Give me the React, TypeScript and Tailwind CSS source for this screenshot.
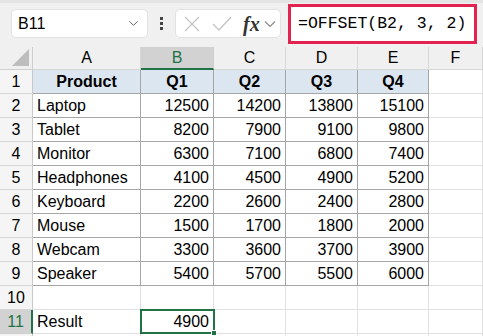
import { ChevronDown } from 'lucide-react';

const rows: [string, number, number, number, number][] = [
  ['Laptop', 12500, 14200, 13800, 15100],
  ['Tablet', 8200, 7900, 9100, 9800],
  ['Monitor', 6300, 7100, 6800, 7400],
  ['Headphones', 4100, 4500, 4900, 5200],
  ['Keyboard', 2200, 2600, 2400, 2800],
  ['Mouse', 1500, 1700, 1800, 2000],
  ['Webcam', 3300, 3600, 3700, 3900],
  ['Speaker', 5400, 5700, 5500, 6000],
];

const cols = ['A', 'B', 'C', 'D', 'E', 'F'];

function Toolbar() {
  return (
    <div className="h-[47px] bg-[#f0f0f0] border-t-[3px] border-[#e4e4e4] flex items-start">
      <div className="mt-[6px] ml-[11px] w-[137px] h-[29px] bg-white border border-[#e2e2e2] rounded-[5px] flex items-center pl-[6px] pr-[6px]">
        <span className="flex-1 text-[16px] text-black">B11</span>
        <ChevronDown className="w-[15px] h-[15px] text-[#555]" strokeWidth={1.5} />
      </div>
      <div className="mt-[14px] ml-[12px] flex flex-col gap-[2px]">
        <div className="w-[3px] h-[3px] bg-[#444]" />
        <div className="w-[3px] h-[3px] bg-[#444]" />
        <div className="w-[3px] h-[3px] bg-[#444]" />
      </div>
      <div className="mt-[6px] ml-[12px] w-[106px] h-[29px] bg-white border border-[#e2e2e2] rounded-[5px] flex items-center pl-[8px]">
        <svg width="16" height="16" viewBox="0 0 16 16" className="mt-[1px]">
          <path d="M1 1 L15 15 M15 1 L1 15" stroke="#c4c4c4" strokeWidth="1.3" fill="none" />
        </svg>
        <svg width="20" height="16" viewBox="0 0 20 16" className="ml-[12px] mt-[1px]">
          <path d="M1 8 L7 14 L19 1" stroke="#c4c4c4" strokeWidth="1.3" fill="none" />
        </svg>
        <span className="ml-[11px] text-[20px] italic font-bold text-[#333] leading-none" style={{ fontFamily: '"Liberation Serif", serif' }}>
          fx
        </span>
        <svg width="12" height="8" viewBox="0 0 12 8" className="ml-[4px]">
          <path d="M1 1.5 L6 6.5 L11 1.5" stroke="#8a8a8a" strokeWidth="1.2" fill="none" />
        </svg>
      </div>
      <div className="mt-[1px] ml-[7px] w-[189px] h-[40px] bg-white border-[3px] border-[#e2224f] flex items-center pl-[7px]">
        <span className="text-[16.5px] text-black whitespace-nowrap" style={{ fontFamily: '"Liberation Mono", monospace' }}>
          =OFFSET(B2, 3, 2)
        </span>
      </div>
    </div>
  );
}

function Cell({
  children,
  table,
  header,
  bold,
  align = 'left',
}: {
  children?: React.ReactNode;
  table?: boolean;
  header?: boolean;
  bold?: boolean;
  align?: 'left' | 'right' | 'center';
}) {
  const border = table ? 'border-[#a6a6a6]' : 'border-[#e1e1e1]';
  const bg = header ? 'bg-[#dce6f1]' : 'bg-white';
  const justify = align === 'right' ? 'justify-end' : align === 'center' ? 'justify-center' : 'justify-start';
  return (
    <div className={`h-[24px] border-r border-b ${border} ${bg} flex items-center px-[4px] ${justify} ${bold ? 'font-bold' : ''}`}>
      {children}
    </div>
  );
}

function RowHead({ n, selected }: { n?: number; selected?: boolean }) {
  return (
    <div
      className={
        selected
          ? 'h-[24px] border-b border-[#d0d0d0] border-r-2 border-r-[#217346] bg-[#d2d2d2] text-[#217346] flex items-center justify-center'
          : 'h-[24px] border-b border-[#d6d6d6] border-r border-r-[#c8c8c8] bg-[#f5f5f5] flex items-center justify-center'
      }
    >
      {n}
    </div>
  );
}

export default function App() {
  return (
    <div className="w-[483px] h-[336px] overflow-hidden bg-white text-[16px] text-black" style={{ fontFamily: '"Liberation Sans", Arial, sans-serif' }}>
      <Toolbar />
      <div className="relative grid grid-cols-[33px_108px_73px_72px_72px_71px_1fr]">
        <div className="h-[23px] bg-[#f0f0f0] border-r border-b border-[#cfcfcf] relative">
          <svg width="17" height="17" viewBox="0 0 17 17" className="absolute right-[3px] bottom-[3px]">
            <path d="M17 0 L17 17 L0 17 Z" fill="#bdbdbd" />
          </svg>
        </div>
        {cols.map((c) =>
          c === 'B' ? (
            <div key={c} className="h-[23px] bg-[#d2d2d2] border-r border-[#cfcfcf] border-b-2 border-b-[#217346] text-[#217346] flex items-center justify-center">
              {c}
            </div>
          ) : (
            <div key={c} className="h-[23px] bg-[#f0f0f0] border-r border-b border-[#d6d6d6] flex items-center justify-center">
              {c}
            </div>
          ),
        )}

        <RowHead n={1} />
        <Cell table header bold align="center">Product</Cell>
        <Cell table header bold align="center">Q1</Cell>
        <Cell table header bold align="center">Q2</Cell>
        <Cell table header bold align="center">Q3</Cell>
        <Cell table header bold align="center">Q4</Cell>
        <Cell />

        {rows.map((r, i) => (
          <div key={r[0]} className="contents">
            <RowHead n={i + 2} />
            <Cell table>{r[0]}</Cell>
            <Cell table align="right">{r[1]}</Cell>
            <Cell table align="right">{r[2]}</Cell>
            <Cell table align="right">{r[3]}</Cell>
            <Cell table align="right">{r[4]}</Cell>
            <Cell />
          </div>
        ))}

        <RowHead n={10} />
        <Cell />
        <Cell />
        <Cell />
        <Cell />
        <Cell />
        <Cell />

        <RowHead n={11} selected />
        <Cell>Result</Cell>
        <Cell align="right">4900</Cell>
        <Cell />
        <Cell />
        <Cell />
        <Cell />

        {/* row 12 only peeks in at the bottom edge */}
        <RowHead />
        <Cell />
        <Cell />
        <Cell />
        <Cell />
        <Cell />
        <Cell />

        <div className="absolute left-[140px] top-[262px] w-[75px] h-[25px] border-2 border-[#217346] pointer-events-none">
          <div className="absolute -right-[4px] -bottom-[4px] w-[6px] h-[6px] bg-[#217346] border border-white" />
        </div>
      </div>
    </div>
  );
}
